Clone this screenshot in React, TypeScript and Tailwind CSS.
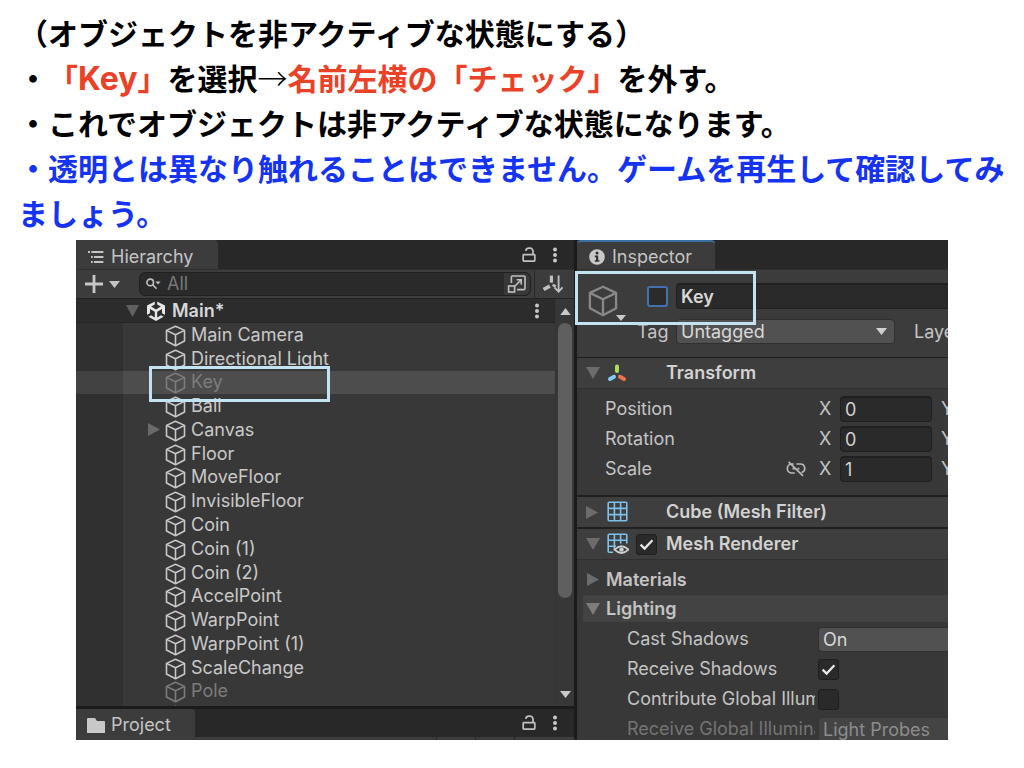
import { ReactNode, useState } from "react";

interface HierarchyItem {
  name: string;
  inactive?: boolean;
  expandable?: boolean;
}

const items: HierarchyItem[] = [
  { name: "Main Camera" },
  { name: "Directional Light" },
  { name: "Key", inactive: true },
  { name: "Ball" },
  { name: "Canvas", expandable: true },
  { name: "Floor" },
  { name: "MoveFloor" },
  { name: "InvisibleFloor" },
  { name: "Coin" },
  { name: "Coin (1)" },
  { name: "Coin (2)" },
  { name: "AccelPoint" },
  { name: "WarpPoint" },
  { name: "WarpPoint (1)" },
  { name: "ScaleChange" },
  { name: "Pole", inactive: true },
  { name: "", inactive: true },
];

function Cube({ className }: { className: string }) {
  return (
    <svg viewBox="0 0 20 22" className={className} fill="none" stroke="currentColor" strokeWidth="1.6" strokeLinejoin="round">
      <path d="M10 1.2 19 5.4V16L10 20.8 1 16V5.4Z" />
      <path d="M1 5.4 10 9.8 19 5.4M10 9.8V20.8" />
    </svg>
  );
}

function Down({ className }: { className: string }) {
  return (
    <svg viewBox="0 0 12 12" preserveAspectRatio="none" className={className} fill="currentColor">
      <path d="M0 0H12L6 12Z" />
    </svg>
  );
}

function Right({ className }: { className: string }) {
  return (
    <svg viewBox="0 0 12 12" preserveAspectRatio="none" className={className} fill="currentColor">
      <path d="M0 0V12L12 6Z" />
    </svg>
  );
}

function Dots() {
  return (
    <svg viewBox="0 0 6 16" className="h-4 w-[6px]" fill="#c8c8c8">
      <circle cx="3" cy="2.4" r="2" />
      <circle cx="3" cy="8" r="2" />
      <circle cx="3" cy="13.6" r="2" />
    </svg>
  );
}

function Lock() {
  return (
    <svg viewBox="0 0 14 16" className="h-4 w-[14px]" fill="none" stroke="#c0c0c0" strokeWidth="1.7">
      <rect x="1.2" y="7.6" width="11.6" height="6.6" rx="0.6" />
      <path d="M11 7.6V4.4C11 2.4 9.8 1.2 8 1.2H7C5.2 1.2 4 2.2 3.8 3.8" />
    </svg>
  );
}

function Grid({ eye }: { eye?: boolean }) {
  return (
    <svg viewBox="0 0 22 22" className="h-[22px] w-[22px] shrink-0" fill="none" stroke="#7fc0ea" strokeWidth="1.6">
      {eye ? (
        <>
          <path d="M6 19.2H2.2Q1.2 19.2 1.2 18.2V2.2Q1.2 1.2 2.2 1.2H18.8Q19.8 1.2 19.8 2.2V10.5M1.2 7.2H19.8M1.2 13.2H9M7.4 1.2V16M13.6 1.2V10.5" />
          <path d="M7.5 16.6Q14.5 9.8 21.5 16.6Q14.5 23.4 7.5 16.6Z" fill="#3e3e3e" stroke="#d0d0d0" strokeWidth="1.8" />
          <circle cx="14.5" cy="16.6" r="2.2" fill="#d0d0d0" stroke="none" />
        </>
      ) : (
        <path d="M2.2 1.2H18.8Q19.8 1.2 19.8 2.2V18.8Q19.8 19.8 18.8 19.8H2.2Q1.2 19.8 1.2 18.8V2.2Q1.2 1.2 2.2 1.2ZM1.2 7.4H19.8M1.2 13.6H19.8M7.4 1.2V19.8M13.6 1.2V19.8" />
      )}
    </svg>
  );
}

interface CheckProps {
  id: string;
  label?: string;
  initial?: boolean;
  focused?: boolean;
}

function Check({ id, label, initial = false, focused = false }: CheckProps) {
  const [checked, setChecked] = useState(initial);
  return (
    <span className="grid shrink-0">
      <input
        id={id}
        type="checkbox"
        aria-label={label}
        checked={checked}
        onChange={(event) => setChecked(event.target.checked)}
        className={
          focused
            ? "col-start-1 row-start-1 h-[21px] w-[21px] appearance-none rounded-[3px] border-2 border-[#4272b0] bg-[#2b2b2b]"
            : "col-start-1 row-start-1 h-[21px] w-[21px] appearance-none rounded-[3px] border border-[#1f1f1f] bg-[#2a2a2a]"
        }
      />
      {checked && (
        <svg viewBox="0 0 21 21" className="pointer-events-none col-start-1 row-start-1 h-[21px] w-[21px]" fill="none" stroke="#e8e8e8" strokeWidth="2.2">
          <path d="M4.6 10.6 8.6 14.6 16.4 6.2" />
        </svg>
      )}
    </span>
  );
}

function AxisRow({ label, value, link }: { label: string; value: string; link?: boolean }) {
  const [current, setCurrent] = useState(value);
  const id = label.toLowerCase();
  return (
    <div className="flex h-[26px] items-center">
      <label htmlFor={id} className="w-[181px] shrink-0 pl-7">{label}</label>
      <span className="flex w-[61px] shrink-0 items-center pl-7">
        {link && (
          <svg viewBox="0 0 20 16" className="h-4 w-5" fill="none" stroke="#b8b8b8" strokeWidth="1.7">
            <path d="M7.6 3H5.8A4.4 4.4 0 0 0 5.8 12H8.8M10.4 3H14A4.4 4.4 0 0 1 15.6 11.6M6.5 7.6H8.8M11.4 7.6H13.4M2.6 0.8 17 14.8" />
          </svg>
        )}
      </span>
      <span className="w-[21px] shrink-0">X</span>
      <input
        id={id}
        value={current}
        onChange={(event) => setCurrent(event.target.value)}
        className="h-[26px] w-[92px] shrink-0 rounded border border-t-2 border-[#202020] bg-[#2a2a2a] px-1 text-[#d2d2d2]"
      />
      <span className="pl-[9px]">Y</span>
    </div>
  );
}

function Component({ title, icon, open }: { title: string; icon: ReactNode; open?: boolean }) {
  return (
    <button type="button" className="flex w-full items-center bg-[#3e3e3e] pl-[9px] text-left font-semibold text-[#d2d2d2]">
      <span className="w-[21px] shrink-0 text-[#6c6c6c]">
        {open ? <Down className="h-3 w-[14px]" /> : <Right className="h-[13px] w-3" />}
      </span>
      <span className="flex w-[59px] shrink-0">{icon}</span>
      {title}
    </button>
  );
}

function LightingRow({ id, label, dim, children }: { id: string; label: string; dim?: boolean; children: ReactNode }) {
  return (
    <div className="flex h-[30px] items-center">
      <label htmlFor={id} className={dim ? "ml-[50px] mr-[3px] w-[188px] shrink-0 overflow-hidden text-[#747474]" : "ml-[50px] mr-[3px] w-[188px] shrink-0 overflow-hidden"}>
        {label}
      </label>
      {children}
    </div>
  );
}

function Hierarchy() {
  const [selected, setSelected] = useState("Key");
  return (
    <section className="flex w-[498px] shrink-0 flex-col bg-[#383838]">
      <header className="flex h-[29px] items-center bg-[#282828]">
        <button type="button" className="flex h-full w-[142px] items-center gap-[7px] rounded-tr bg-[#3c3c3c] pl-3 pt-1">
          <svg viewBox="0 0 16 14" className="h-[14px] w-4" stroke="#c4c4c4" strokeWidth="1.8">
            <path d="M3.4 2H15.4M6 7H15.4M6 12H15.4M0 2H2M3 7H4.8M3 12H4.8" />
          </svg>
          Hierarchy
        </button>
        <span className="flex flex-1 items-center justify-end gap-4 pr-4"><Lock /><Dots /></span>
      </header>

      <div className="flex h-[30px] items-center border-b border-t border-b-[#232323] border-t-[#303030] bg-[#3c3c3c]">
        <button type="button" aria-label="Add" className="flex w-[63px] items-center gap-[6px] pl-[9px]">
          <svg viewBox="0 0 18 18" className="h-[18px] w-[18px]" stroke="#c8c8c8" strokeWidth="2.8">
            <path d="M9 0V18M0 9H18" />
          </svg>
          <Down className="h-[7px] w-[11px] text-[#c4c4c4]" />
        </button>
        <div className="flex h-6 flex-1 items-center rounded-md border border-[#202020] bg-[#2a2a2a] pl-[6px]">
          <svg viewBox="0 0 15 12" className="h-3 w-[15px]" fill="none" stroke="#c0c0c0" strokeWidth="1.6">
            <circle cx="4.2" cy="4.4" r="3.3" />
            <path d="M6.6 6.8 10.6 10.8" />
            <path d="M9.4 3.4H14.6L12 6.4Z" fill="#c0c0c0" stroke="none" />
          </svg>
          <input aria-label="Search" placeholder="All" className="min-w-0 flex-1 bg-transparent pl-[6px] placeholder:text-[#777777]" />
          <button type="button" aria-label="Open search window" className="flex h-full w-[26px] items-center justify-center rounded-r-md bg-[#383838]">
            <svg viewBox="0 0 20 20" className="h-5 w-5" fill="none" stroke="#c0c0c0" strokeWidth="1.6">
              <path d="M4.4 9V3Q4.4 2 5.4 2H17Q18 2 18 3V14.6Q18 15.6 17 15.6H10" />
              <rect x="1.6" y="12" width="6" height="6" />
              <path d="M8 12 14 6M9.6 5.8H14.2V10.4" />
            </svg>
          </button>
        </div>
        <button type="button" aria-label="Sort" className="ml-[3px] flex h-full w-10 items-center justify-center border-l border-[#2a2a2a] pr-1">
          <svg viewBox="0 0 20 18" className="h-[18px] w-5" fill="none" stroke="#c0c0c0">
            <path d="M8.4 0.6V7.6" strokeWidth="3.2" />
            <path d="M0.6 14.4 6.8 11.2" strokeWidth="3.6" />
            <path d="M9.6 9.8 12.8 11.4" strokeWidth="2.6" />
            <path d="M15.6 0.6V16.4M11.4 12.4 15.6 16.6 19.6 12.4" strokeWidth="1.8" />
          </svg>
        </button>
      </div>

      <div className="flex h-[407px] overflow-hidden">
        <div className="min-w-0 flex-1">
          <div className="flex h-6 items-center border-b border-[#252525] bg-[#2c2c2c] pl-[50px] pr-[15px] font-semibold text-[#d8d8d8]">
            <Down className="h-3 w-[13px] text-[#606060]" />
            <svg viewBox="0 0 20 20" className="ml-[7px] mr-[6px] h-5 w-5">
              <path d="M10 0 19 4.6V15L10 20 1 15V4.6Z" fill="#e6e6e6" />
              <path d="M8.8 0H11.2V3.4L14.8 5.6 10 8.4 5.2 5.6 8.8 3.4Z" fill="#2c2c2c" />
              <path d="M4 8 8.8 10.8V16.4L5 14.2 1.6 16.2 0.4 14.2 4 12.2Z" fill="#2c2c2c" />
              <path d="M16 8 11.2 10.8V16.4L15 14.2 18.4 16.2 19.6 14.2 16 12.2Z" fill="#2c2c2c" />
            </svg>
            <span className="flex-1">Main*</span>
            <Dots />
          </div>
          <ul className="grid h-[404px] auto-rows-fr">
            {items.map((item) => (
              <li key={item.name} className={item.name === selected ? "flex bg-[#4d4d4d]" : "flex"}>
                <span className={item.name === selected ? "w-[47px] bg-[#424242]" : "w-[47px] bg-[#303030]"} />
                <button
                  type="button"
                  aria-label={item.name || "Item"}
                  onClick={() => setSelected(item.name)}
                  className={item.inactive ? "flex flex-1 items-center text-[#7c7c7c]" : "flex flex-1 items-center text-[#c8c8c8]"}
                >
                  <span className="w-[42px] pl-[25px] text-[#6a6a6a]">
                    {item.expandable && <Right className="h-[13px] w-3" />}
                  </span>
                  <Cube className="mr-[5px] mt-[2px] h-[22px] w-[21px]" />
                  {item.name}
                </button>
              </li>
            ))}
          </ul>
        </div>
        <div className="flex w-[19px] flex-col items-center border-l border-[#333333] bg-[#373737] pb-2 pt-[9px] text-[#c8c8c8]">
          <svg viewBox="0 0 12 8" className="h-[7px] w-[11px] shrink-0" fill="currentColor"><path d="M6 0 12 8H0Z" /></svg>
          <span className="mb-auto mt-2 h-[275px] w-[14px] rounded-full bg-[#5f5f5f]" />
          <Down className="h-[7px] w-[11px] shrink-0" />
        </div>
      </div>

      <footer className="border-t-[3px] border-[#1b1b1b] bg-[#282828]">
        <div className="flex h-7 items-center">
          <button type="button" className="flex h-full w-[119px] items-center gap-[6px] rounded-tr bg-[#3c3c3c] pl-[11px] pt-1">
            <svg viewBox="0 0 18 15" className="h-[15px] w-[18px]" fill="#c8c8c8"><path d="M0 1Q0 0 1 0H8L10 3H17Q18 3 18 4V15H0Z" /></svg>
            Project
          </button>
          <span className="flex flex-1 items-center justify-end gap-4 pr-4"><Lock /><Dots /></span>
        </div>
        <div className="flex h-[3px] justify-end bg-[#3c3c3c]">
          <span className="w-[39px] border-l border-[#252525]" />
          <span className="w-[39px] border-l border-[#252525]" />
          <span className="w-[60px] border-l border-[#252525]" />
        </div>
      </footer>
    </section>
  );
}

function Inspector() {
  const [name, setName] = useState("Key");
  return (
    <section className="relative min-w-0 flex-1 border-l-[3px] border-[#1b1b1b]">
      {/* longer than the window, so the lower rows are cut */}
      <div className="absolute inset-0 overflow-hidden bg-[#383838]">
        <header className="flex h-[29px] bg-[#282828]">
          <button type="button" className="flex w-[138px] items-center gap-[7px] rounded-t border-t-2 border-[#3b6ea5] bg-[#3c3c3c] pl-3 pt-[2px]">
            <svg viewBox="0 0 16 16" className="h-4 w-4">
              <circle cx="8" cy="8" r="7.8" fill="#c8c8c8" />
              <circle cx="8" cy="4" r="1.5" fill="#303030" />
              <path d="M5.8 6.6H9.2V11.2H10.4V12.8H5.8V11.2H7V8.2H5.8Z" fill="#303030" />
            </svg>
            Inspector
          </button>
        </header>

        <div className="h-[88px] border-t border-[#303030] bg-[#3c3c3c] pt-[13px]">
          <div className="flex h-[26px] items-center">
            <span className="relative ml-[11px] mr-[29px] shrink-0 text-[#888888]">
              <Cube className="mt-[9px] h-8 w-[30px]" />
              <Down className="absolute -bottom-1 -right-2 h-[6px] w-[10px] text-[#c8c8c8]" />
            </span>
            <Check id="active" label="Active" focused />
            <input
              aria-label="Name"
              value={name}
              onChange={(event) => setName(event.target.value)}
              className="ml-2 h-[26px] min-w-0 flex-1 rounded-l border border-r-0 border-t-2 border-[#202020] bg-[#2a2a2a] px-1 font-semibold text-[#d8d8d8]"
            />
          </div>
          <div className="mt-[10px] flex h-[25px] items-center">
            <label htmlFor="tag" className="w-[99px] shrink-0 pl-[60px]">Tag</label>
            <span className="grid w-[219px] shrink-0 items-center">
              <select id="tag" className="col-start-1 row-start-1 h-[25px] appearance-none rounded border border-[#303030] bg-[#515151] px-1 text-[#d8d8d8]">
                <option>Untagged</option>
              </select>
              <Down className="pointer-events-none col-start-1 row-start-1 mr-2 h-[7px] w-[11px] justify-self-end text-[#d0d0d0]" />
            </span>
            <span className="pl-[19px]">Layer</span>
          </div>
        </div>

        <div className="flex h-8 border-b border-t border-b-[#303030] border-t-[#1f1f1f]">
          <Component
            title="Transform"
            open
            icon={
              <svg viewBox="0 0 20 18" className="h-[18px] w-5" fill="none" strokeWidth="4" strokeLinecap="round">
                <path d="M10 2.4V7" stroke="#a8e05a" />
                <path d="M3 15 7 12.8" stroke="#80ccf4" />
                <path d="M13 12.8 17 15" stroke="#f0744a" />
              </svg>
            }
          />
        </div>
        <div className="flex flex-col gap-1 pb-[13px] pt-[7px]">
          <AxisRow label="Position" value="0" />
          <AxisRow label="Rotation" value="0" />
          <AxisRow label="Scale" value="1" link />
        </div>
        <div className="flex h-8 border-t-2 border-[#202020]">
          <Component title="Cube (Mesh Filter)" icon={<Grid />} />
        </div>
        <div className="flex h-[33px] border-b border-t-2 border-b-[#303030] border-t-[#202020]">
          <div className="flex w-full items-center bg-[#3e3e3e] pl-[9px] font-semibold text-[#d2d2d2]">
            <Down className="mr-[7px] h-3 w-[14px] text-[#6c6c6c]" />
            <Grid eye />
            <span className="ml-[7px] mr-[9px] flex"><Check id="renderer" initial /></span>
            <label htmlFor="renderer">Mesh Renderer</label>
          </div>
        </div>

        <button type="button" className="mt-1 flex h-[31px] items-center pl-[10px] font-semibold">
          <Right className="mr-[7px] h-[13px] w-3 text-[#6c6c6c]" />
          Materials
        </button>
        <div className="flex pl-[6px]">
          <button type="button" className="flex h-[27px] flex-1 items-center bg-[#434343] pl-[3px] font-semibold">
            <Down className="mr-[6px] h-3 w-[14px] text-[#7c7c7c]" />
            Lighting
          </button>
        </div>
        <div className="pt-[2px]">
          <LightingRow id="cast" label="Cast Shadows">
            <select id="cast" className="h-[25px] min-w-0 flex-1 appearance-none rounded-l border border-r-0 border-[#303030] bg-[#515151] px-1 text-[#d8d8d8]">
              <option>On</option>
            </select>
          </LightingRow>
          <LightingRow id="receive" label="Receive Shadows">
            <Check id="receive" initial />
          </LightingRow>
          <LightingRow id="contribute" label="Contribute Global Illumination">
            <Check id="contribute" />
          </LightingRow>
          <LightingRow id="receive-gi" label="Receive Global Illumination" dim>
            <select id="receive-gi" disabled className="h-[25px] min-w-0 flex-1 appearance-none rounded-l border border-r-0 border-[#363636] bg-[#444444] px-1 text-[#8c8c8c] opacity-100">
              <option>Light Probes</option>
            </select>
          </LightingRow>
        </div>
      </div>
    </section>
  );
}

export default function App() {
  return (
    <main className="min-h-screen bg-white">
      <div className="pl-[18px] pr-4 pt-3 font-['Inter','Noto_Sans_CJK_JP',sans-serif] text-[30px] font-bold leading-[45px] text-black [text-spacing-trim:space-all]">
        <p>（オブジェクトを非アクティブな状態にする）</p>
        <p>
          ・<span className="text-[#eb4127]">「<span className="text-[32px] leading-none">Key</span>」</span>を選択<span className="font-['Noto_Sans_CJK_JP',sans-serif] font-light leading-none">→</span>
          <span className="text-[#eb4127]">名前左横の「チェック」</span>を外す。
        </p>
        <p>・これでオブジェクトは非アクティブな状態になります。</p>
        <p className="text-[#1433f5]">・透明とは異なり触れることはできません。ゲームを再生して確認してみましょう。</p>
      </div>

      <div className="relative mx-[76px] mt-[3px] flex whitespace-nowrap font-['Inter',sans-serif] text-[18px] leading-6 text-[#c4c4c4]">
        <Hierarchy />
        <Inspector />
        {/* callout frames */}
        <span className="pointer-events-none absolute left-[73px] top-[126px] h-9 w-[181px] border-[3px] border-[#c3e2f2]" />
        <span className="pointer-events-none absolute left-[499px] top-[31px] h-[54px] w-[181px] border-[3px] border-[#c3e2f2]" />
      </div>
    </main>
  );
}
